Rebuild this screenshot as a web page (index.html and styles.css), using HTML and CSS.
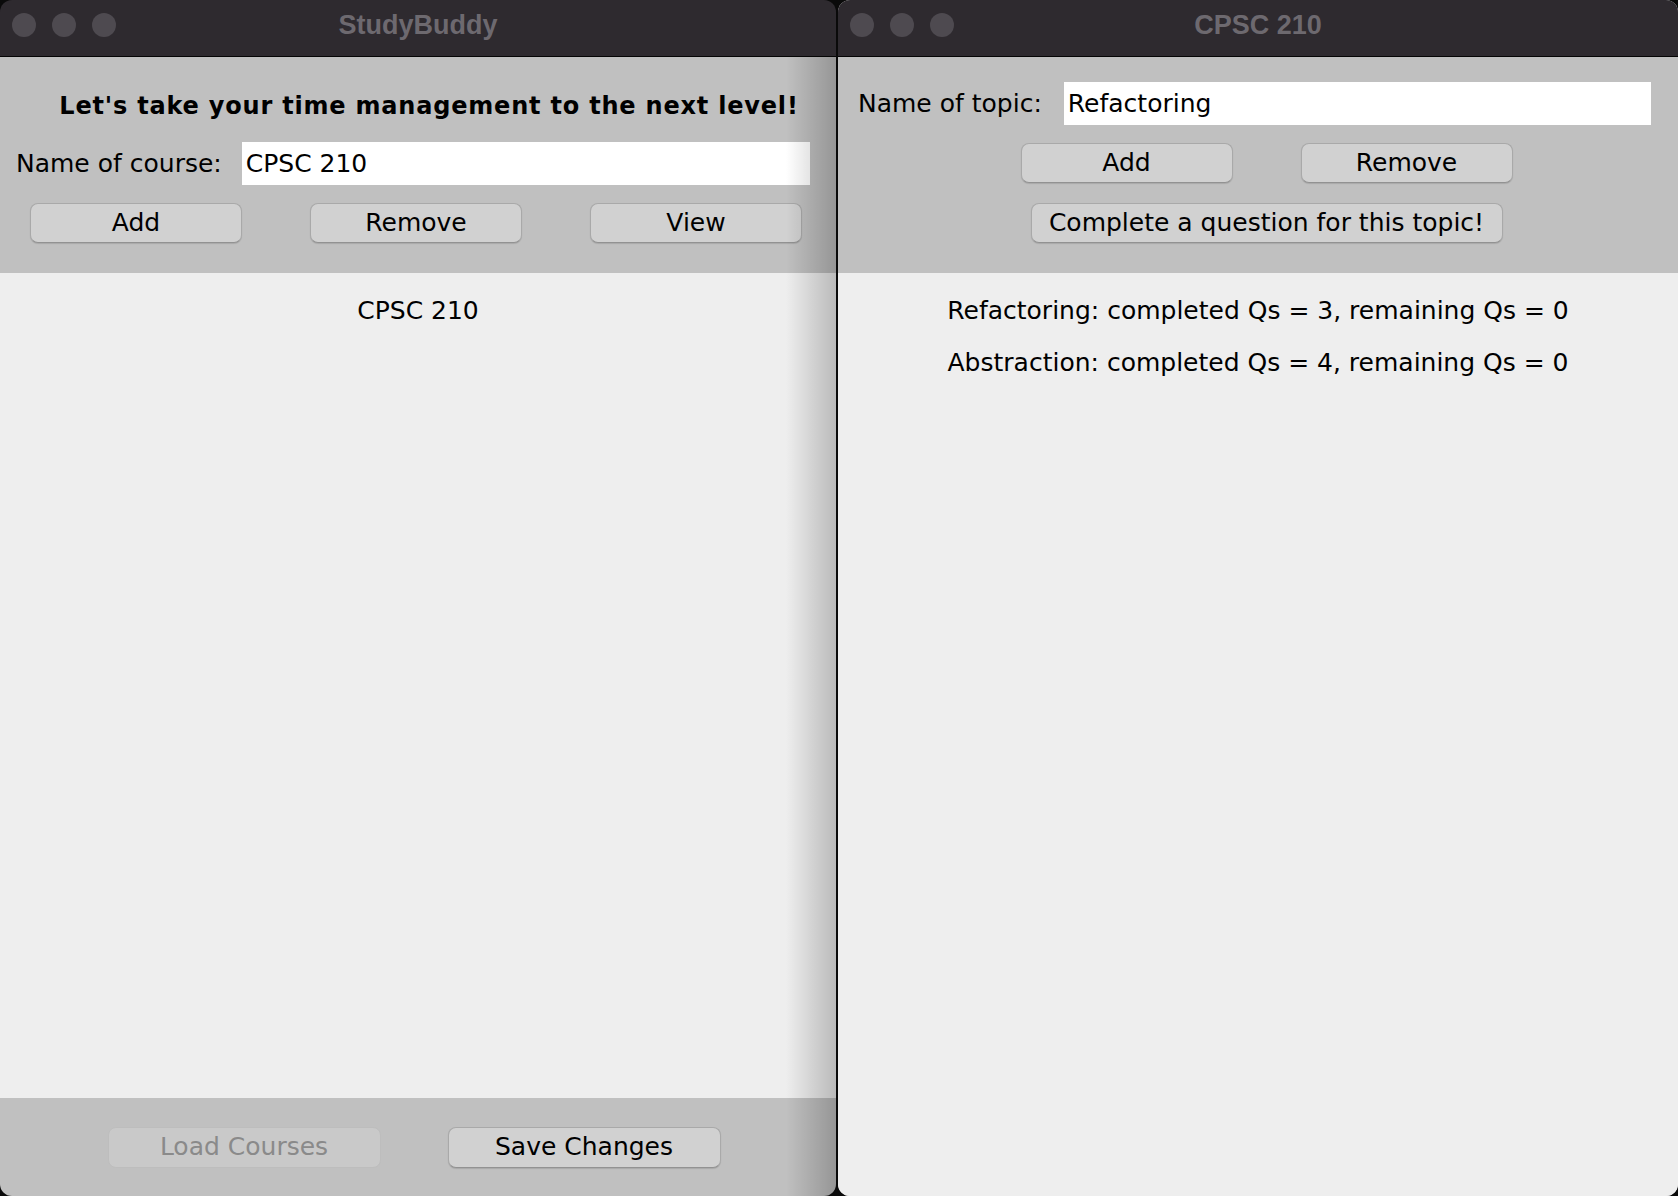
FILE: index.html
```html
<!DOCTYPE html>
<html>
<head>
<meta charset="utf-8">
<title>StudyBuddy</title>
<link rel="stylesheet" href="styles.css">
</head>
<body>
<div class="desktop">
  <div class="window window-left">
    <div class="titlebar">
      <div class="lights"><span class="light"></span><span class="light"></span><span class="light"></span></div>
      <div class="title">StudyBuddy</div>
    </div>
    <div class="header header-left">
      <div class="heading">Let's take your time management to the next level!</div>
      <div class="field-row field-row-left">
        <span class="label">Name of course:</span>
        <div class="field">CPSC 210</div>
      </div>
      <div class="btn-row three">
        <div class="btn">Add</div>
        <div class="btn">Remove</div>
        <div class="btn">View</div>
      </div>
    </div>
    <div class="list">
      <div class="item">CPSC 210</div>
    </div>
    <div class="footer">
      <div class="btn wide disabled">Load Courses</div>
      <div class="btn wide">Save Changes</div>
    </div>
  </div>
  <div class="window window-right">
    <div class="titlebar">
      <div class="lights"><span class="light"></span><span class="light"></span><span class="light"></span></div>
      <div class="title">CPSC 210</div>
    </div>
    <div class="header header-right">
      <div class="field-row field-row-right">
        <span class="label">Name of topic:</span>
        <div class="field">Refactoring</div>
      </div>
      <div class="btn-row two">
        <div class="btn">Add</div>
        <div class="btn">Remove</div>
      </div>
      <div class="btn-row one">
        <div class="btn complete">Complete a question for this topic!</div>
      </div>
    </div>
    <div class="list list-right">
      <div class="item">Refactoring: completed Qs = 3, remaining Qs = 0</div>
      <div class="item">Abstraction: completed Qs = 4, remaining Qs = 0</div>
    </div>
  </div>
</div>
</body>
</html>
```
FILE: styles.css
```css
* { box-sizing: border-box; }
html, body { margin: 0; padding: 0; }
body {
  background: #0a0a0a;
  font-family: "DejaVu Sans", "Liberation Sans", sans-serif;
  color: #000;
  width: 1678px;
  height: 1196px;
  overflow: hidden;
}
.desktop {
  display: flex;
  gap: 2px;
  height: 1196px;
}
.window {
  display: flex;
  flex-direction: column;
  height: 1196px;
  border-radius: 12px;
  overflow: hidden;
  position: relative;
}
.window-left { width: 836px; }
.window-right { width: 840px; background: #eeeeee; }
.window-left::after {
  content: "";
  position: absolute;
  top: 57px;
  right: 0;
  bottom: 0;
  width: 50px;
  background: linear-gradient(to right, rgba(0,0,0,0), rgba(0,0,0,0.22));
  pointer-events: none;
}
.titlebar {
  height: 57px;
  flex: none;
  background: #2e2a2f;
  border-bottom: 1px solid #050505;
  display: flex;
  align-items: center;
  position: relative;
}
.lights {
  display: flex;
  gap: 16px;
  padding-left: 12px;
  position: absolute;
  left: 0;
  top: 13px;
}
.light {
  width: 24px;
  height: 24px;
  border-radius: 50%;
  background: #4e4a50;
}
.title {
  flex: 1;
  text-align: center;
  font-family: "Liberation Sans", Arial, sans-serif;
  font-weight: bold;
  font-size: 27px;
  color: #6d696f;
  padding-bottom: 6px;
}
.header {
  background: #c0c0c0;
  flex: none;
  height: 216px;
  display: flex;
  flex-direction: column;
}
.header-left {
  padding: 34px 26px 0 16px;
}
.heading {
  font-weight: bold;
  font-size: 24px;
  line-height: 30px;
  text-align: center;
  padding-left: 32px;
  letter-spacing: 0.8px;
  white-space: nowrap;
}
.field-row {
  display: flex;
  align-items: center;
  height: 43px;
}
.field-row-left { margin-top: 21px; }
.label {
  font-size: 25px;
  flex: none;
}
.field {
  flex: 1;
  height: 43px;
  background: #fff;
  font-size: 25px;
  line-height: 43px;
  padding-left: 4px;
}
.field-row-left .field { margin-left: 20px; }
.field-row-right .field { margin-left: 22px; }
.btn {
  height: 40px;
  width: 212px;
  background: #d1d1d1;
  border: 1px solid #a9a9a9;
  border-bottom-color: #929292;
  border-radius: 8px;
  box-shadow: 0 1px 1px rgba(0,0,0,0.12);
  font-size: 25px;
  line-height: 38px;
  text-align: center;
  white-space: nowrap;
}
.btn-row { display: flex; }
.btn-row.three {
  margin-top: 18px;
  padding-left: 14px;
  justify-content: space-between;
  width: 786px;
}
.header-right {
  padding: 25px 27px 0 20px;
}
.btn-row.two {
  margin-top: 18px;
  justify-content: center;
  gap: 68px;
  padding-left: 24px;
}
.btn-row.one {
  margin-top: 20px;
  justify-content: center;
  padding-left: 24px;
}
.btn.complete { width: 472px; }
.list {
  flex: 1;
  background: #eeeeee;
  padding-top: 23px;
  display: flex;
  flex-direction: column;
  align-items: center;
}
.item {
  font-size: 25px;
  line-height: 30px;
  white-space: nowrap;
}
.list-right { gap: 22px; }
.footer {
  flex: none;
  height: 98px;
  background: #c0c0c0;
  display: flex;
  justify-content: center;
  align-items: flex-start;
  padding-top: 29px;
  gap: 67px;
  padding-right: 8px;
}
.btn.wide { width: 273px; height: 41px; }
.btn.disabled {
  color: #8a8a8a;
  background: #c9c9c9;
  border-color: #bdbdbd;
  box-shadow: none;
}
```
